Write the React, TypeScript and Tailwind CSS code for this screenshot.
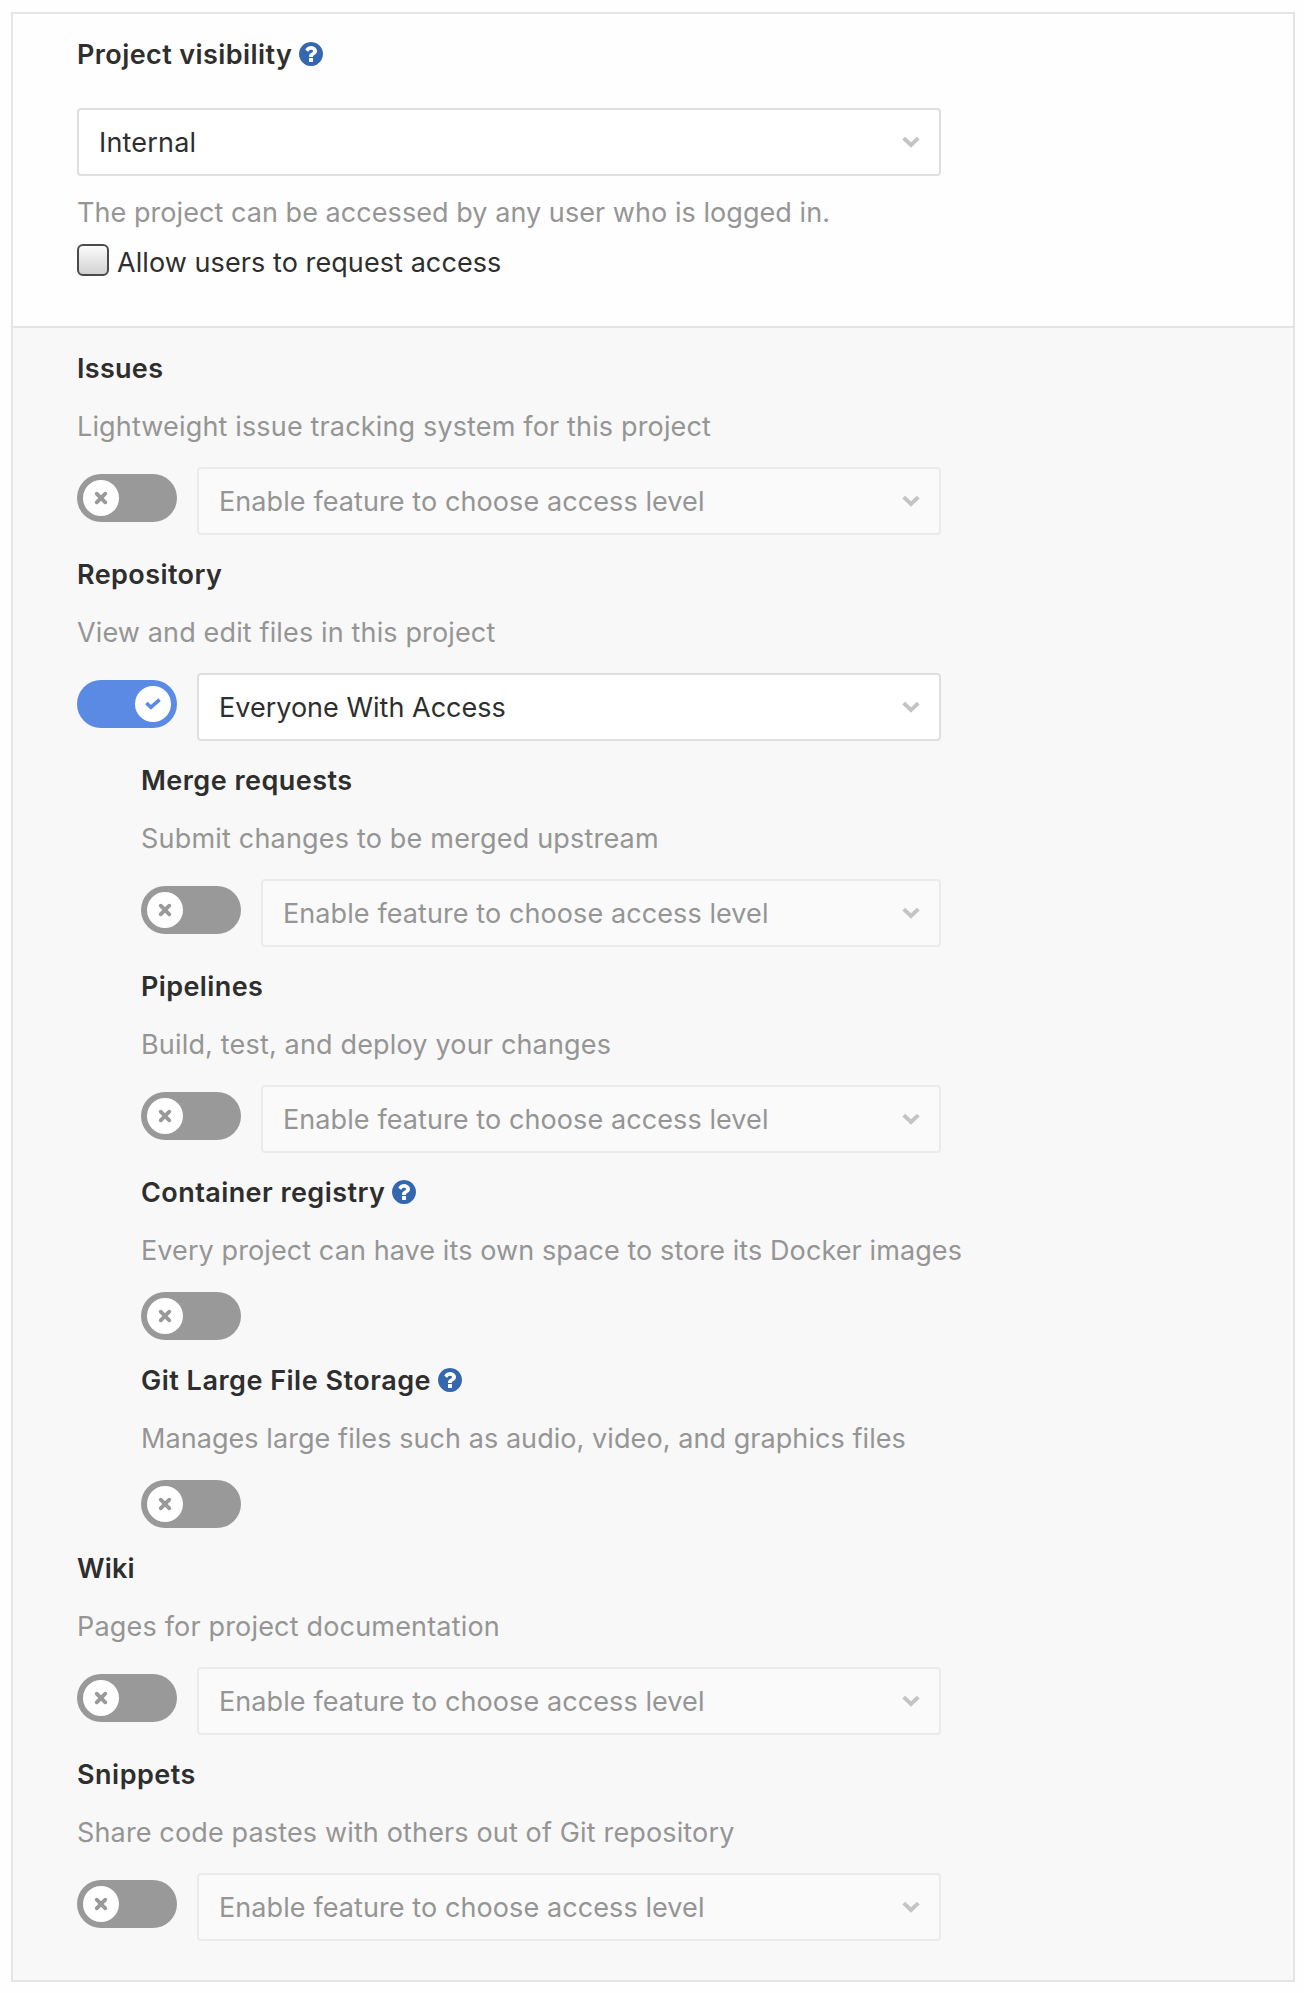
import React from "react";

type Feature = {
  title: string;
  titleTracking: string;
  description: string;
  descriptionTracking: string;
  enabled?: boolean;
  help?: boolean;
  nested?: boolean;
  access?: string;
};

const DISABLED_LABEL = "Enable feature to choose access level";

const features: Feature[] = [
  {
    title: "Issues",
    titleTracking: "tracking-[0.3px]",
    description: "Lightweight issue tracking system for this project",
    descriptionTracking: "tracking-[0.155px]",
    access: DISABLED_LABEL,
  },
  {
    title: "Repository",
    titleTracking: "tracking-[0.41px]",
    description: "View and edit files in this project",
    descriptionTracking: "tracking-[0.14px]",
    enabled: true,
    access: "Everyone With Access",
  },
  {
    title: "Merge requests",
    titleTracking: "tracking-[0.46px]",
    description: "Submit changes to be merged upstream",
    descriptionTracking: "tracking-[0.19px]",
    nested: true,
    access: DISABLED_LABEL,
  },
  {
    title: "Pipelines",
    titleTracking: "tracking-[0.386px]",
    description: "Build, test, and deploy your changes",
    descriptionTracking: "tracking-[0.17px]",
    nested: true,
    access: DISABLED_LABEL,
  },
  {
    title: "Container registry",
    titleTracking: "tracking-[0.43px]",
    description: "Every project can have its own space to store its Docker images",
    descriptionTracking: "tracking-[0.095px]",
    help: true,
    nested: true,
  },
  {
    title: "Git Large File Storage",
    titleTracking: "tracking-[0.5px]",
    description: "Manages large files such as audio, video, and graphics files",
    descriptionTracking: "tracking-[0.068px]",
    help: true,
    nested: true,
  },
  {
    title: "Wiki",
    titleTracking: "tracking-[0.2px]",
    description: "Pages for project documentation",
    descriptionTracking: "tracking-[0.18px]",
    access: DISABLED_LABEL,
  },
  {
    title: "Snippets",
    titleTracking: "tracking-[0.5px]",
    description: "Share code pastes with others out of Git repository",
    descriptionTracking: "tracking-[0.145px]",
    access: DISABLED_LABEL,
  },
];

function HelpIcon() {
  return (
    <svg viewBox="128 128 1536 1536" className="h-6 w-6 shrink-0 text-[#3567af]" fill="currentColor">
      <circle cx="896" cy="896" r="700" fill="#fff" />
      <path d="M1024 1376v-192q0-14-9-23t-23-9h-192q-14 0-23 9t-9 23v192q0 14 9 23t23 9h192q14 0 23-9t9-23zm256-672q0-88-55.5-163t-138.5-116-170-41q-243 0-371 213-15 24 8 42l132 100q7 6 19 6 16 0 25-12 53-68 86-92 34-24 86-24 48 0 85.5 26t37.5 59q0 38-20 61t-68 45q-63 28-115.5 86.5t-52.5 125.5v36q0 14 9 23t23 9h192q14 0 23-9t9-23q0-19 21.5-49.5t54.5-49.5q32-18 49-28.5t46-35 44.5-48 28-60.5 12.5-81zm384 192q0 209-103 385.5t-279.5 279.5-385.5 103-385.5-103-279.5-279.5-103-385.5 103-385.5 279.5-279.5 385.5-103 385.5 103 279.5 279.5 103 385.5z" />
    </svg>
  );
}

function Title({ text, tracking, help }: { text: string; tracking: string; help?: boolean }) {
  return (
    <div className="flex h-10 items-center gap-[7px]">
      <h2 className={`pt-0.5 font-semibold leading-10 ${tracking}`}>{text}</h2>
      {help && <HelpIcon />}
    </div>
  );
}

function Select({ label, tracking, disabled }: { label: string; tracking: string; disabled?: boolean }) {
  return (
    <div
      className={`flex h-[68px] flex-1 items-center justify-between rounded-[4px] border-2 pl-5 pr-[19px] ${
        disabled ? "border-[#ebebeb] bg-[#fafafa] text-[#959595]" : "border-[#dfdfdf] bg-white text-[#2e2e2e]"
      }`}
    >
      <span className={`pt-0.5 leading-10 ${tracking}`}>{label}</span>
      <svg viewBox="0 0 18 12" className="h-3 w-[18px]" fill="none" stroke="#c4c4c4" strokeWidth="4">
        <path d="M1.7 2.1 9 8.9l7.3-6.8" />
      </svg>
    </div>
  );
}

function Toggle({ on }: { on?: boolean }) {
  return (
    <div className={`flex h-12 w-[100px] shrink-0 items-center rounded-full px-1.5 ${on ? "justify-end bg-[#5b8ae5]" : "bg-[#999999]"}`}>
      <div className="flex h-9 w-9 items-center justify-center rounded-full bg-white">
        {on ? (
          <svg viewBox="0 0 16 12" className="h-3 w-4" fill="none" stroke="#5b8ae5" strokeWidth="3.6">
            <path d="M1.4 5 5.9 9.4l8.7-7.8" />
          </svg>
        ) : (
          <svg viewBox="0 0 14 14" className="h-3.5 w-3.5" fill="none" stroke="#999999" strokeWidth="3.8" strokeLinecap="round">
            <path d="m2.7 2.7 8.6 8.6M11.3 2.7l-8.6 8.6" />
          </svg>
        )}
      </div>
    </div>
  );
}

function FeatureRow({ feature }: { feature: Feature }) {
  return (
    <section className={feature.nested ? "pl-16" : ""}>
      <Title text={feature.title} tracking={feature.titleTracking} help={feature.help} />
      <p className={`mt-[18px] h-10 whitespace-nowrap leading-[42px] text-[#959595] ${feature.descriptionTracking}`}>{feature.description}</p>
      {feature.access ? (
        <div className="flex gap-5 pb-[19px] pt-[21px]">
          <div className="pt-[7px]">
            <Toggle on={feature.enabled} />
          </div>
          <Select
            label={feature.access}
            tracking={feature.enabled ? "tracking-[0.01px]" : "tracking-[0.09px]"}
            disabled={!feature.enabled}
          />
        </div>
      ) : (
        <div className="pb-5 pt-[22px]">
          <Toggle on={feature.enabled} />
        </div>
      )}
    </section>
  );
}

export default function App() {
  return (
    <div className="h-[1993px] w-[1304px] bg-[#fefefe] pl-[11px] pt-3 font-['Inter',sans-serif] text-[27px] text-[#2e2e2e]">
      <div className="w-[1284px] border-2 border-[#e5e5e5]">
        <div className="h-[314px] border-b-2 border-[#e5e5e5] bg-[#fefefe] px-16 pt-5">
          <div className="w-[864px]">
            <Title text="Project visibility" tracking="tracking-[0.41px]" help />
            <div className="mt-[34px] flex">
              <Select label="Internal" tracking="tracking-[0.2px]" />
            </div>
            <p className="mt-4 h-10 leading-[42px] tracking-[0.055px] text-[#959595]">
              The project can be accessed by any user who is logged in.
            </p>
            <label className="mt-2.5 flex h-10 items-start gap-2">
              <span className="mt-[2px] h-8 w-8 rounded-[6px] border-2 border-[#4a4a4a] bg-gradient-to-b from-[#fbfbfb] to-[#d2d2d2]" />
              <span className="leading-[42px] tracking-[0.08px]">Allow users to request access</span>
            </label>
          </div>
        </div>
        <div className="bg-[#f8f8f8] px-16 py-5">
          <div className="w-[864px]">
            {features.map((feature) => (
              <FeatureRow key={feature.title} feature={feature} />
            ))}
          </div>
        </div>
      </div>
    </div>
  );
}
